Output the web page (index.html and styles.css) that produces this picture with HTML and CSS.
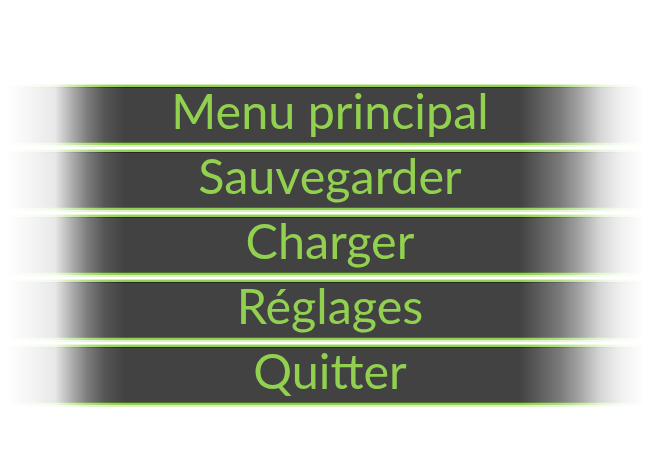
FILE: index.html
```html
<!DOCTYPE html>
<html lang="fr">
<head>
<meta charset="utf-8">
<title>Menu</title>
<link rel="stylesheet" href="styles.css">
</head>
<body>
<nav class="menu">
  <div class="item">Menu principal</div>
  <div class="item">Sauvegarder</div>
  <div class="item">Charger</div>
  <div class="item">Réglages</div>
  <div class="item">Quitter</div>
</nav>
</body>
</html>
```
FILE: styles.css
```css
html, body {
  margin: 0;
  background: #ffffff;
}
.menu {
  padding-top: 84px;
  display: flex;
  flex-direction: column;
  gap: 2px;
}
.item {
  height: 63px;
  box-sizing: border-box;
  display: flex;
  align-items: center;
  justify-content: center;
  padding-bottom: 12px;
  font-family: Lato, "Open Sans", sans-serif;
  font-size: 48.5px;
  color: #92d050;
  background: linear-gradient(to bottom,
    #d3ebb3 0, #d3ebb3 1px,
    #92d050 1px, #92d050 3px,
    #262626 3px, #262626 4px,
    #424242 4px, #424242 calc(100% - 5px),
    #4c6e2b calc(100% - 5px), #4c6e2b calc(100% - 4px),
    #92d050 calc(100% - 4px), #92d050 calc(100% - 2px),
    #dcefc6 calc(100% - 2px), #dcefc6 100%);
  -webkit-mask-image: linear-gradient(to right,
    rgba(0,0,0,0) 5px, rgba(0,0,0,0.05) 30px, rgba(0,0,0,0.12) 55px,
    rgba(0,0,0,0.4) 70px, rgba(0,0,0,0.7) 88px, rgba(0,0,0,0.9) 105px, #000 125px,
    #000 520px, rgba(0,0,0,0.7) 560px, rgba(0,0,0,0.5) 578px,
    rgba(0,0,0,0.22) 600px, rgba(0,0,0,0.08) 620px, rgba(0,0,0,0) 645px);
  mask-image: linear-gradient(to right,
    rgba(0,0,0,0) 5px, rgba(0,0,0,0.05) 30px, rgba(0,0,0,0.12) 55px,
    rgba(0,0,0,0.4) 70px, rgba(0,0,0,0.7) 88px, rgba(0,0,0,0.9) 105px, #000 125px,
    #000 520px, rgba(0,0,0,0.7) 560px, rgba(0,0,0,0.5) 578px,
    rgba(0,0,0,0.22) 600px, rgba(0,0,0,0.08) 620px, rgba(0,0,0,0) 645px);
}
```
